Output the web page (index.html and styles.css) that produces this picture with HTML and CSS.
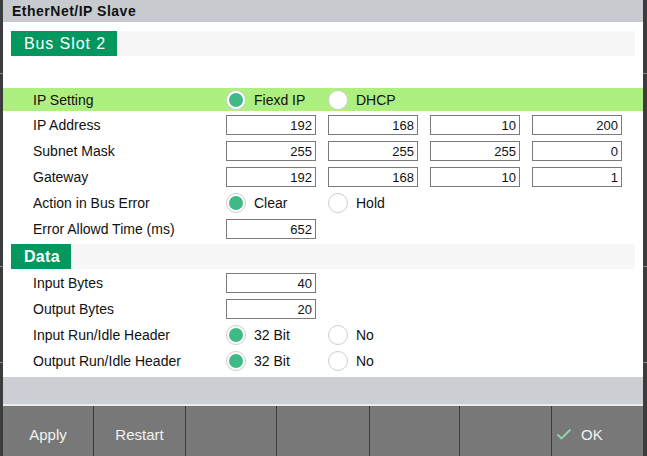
FILE: index.html
```html
<!DOCTYPE html>
<html>
<head>
<meta charset="utf-8">
<title>EtherNet/IP Slave</title>
<link rel="stylesheet" href="styles.css">
</head>
<body>
<div class="dialog">
  <div class="titlebar">EtherNet/IP Slave</div>
  <div class="content">
    <div class="section first"><span class="tag">Bus Slot 2</span></div>
    <div class="spacer"></div>
    <div class="row hl">
      <span class="label">IP Setting</span>
      <span class="radio"><i class="dot on"></i>Fiexd IP</span>
      <span class="radio"><i class="dot"></i>DHCP</span>
    </div>
    <div class="row">
      <span class="label">IP Address</span>
      <span class="field">192</span><span class="field">168</span><span class="field">10</span><span class="field">200</span>
    </div>
    <div class="row">
      <span class="label">Subnet Mask</span>
      <span class="field">255</span><span class="field">255</span><span class="field">255</span><span class="field">0</span>
    </div>
    <div class="row">
      <span class="label">Gateway</span>
      <span class="field">192</span><span class="field">168</span><span class="field">10</span><span class="field">1</span>
    </div>
    <div class="row">
      <span class="label">Action in Bus Error</span>
      <span class="radio"><i class="dot on"></i>Clear</span>
      <span class="radio"><i class="dot"></i>Hold</span>
    </div>
    <div class="row">
      <span class="label">Error Allowd Time (ms)</span>
      <span class="field">652</span>
    </div>
    <div class="section"><span class="tag bold">Data</span></div>
    <div class="row">
      <span class="label">Input Bytes</span>
      <span class="field">40</span>
    </div>
    <div class="row">
      <span class="label">Output Bytes</span>
      <span class="field">20</span>
    </div>
    <div class="row">
      <span class="label">Input Run/Idle Header</span>
      <span class="radio"><i class="dot on"></i>32 Bit</span>
      <span class="radio"><i class="dot"></i>No</span>
    </div>
    <div class="row">
      <span class="label">Output Run/Idle Header</span>
      <span class="radio"><i class="dot on"></i>32 Bit</span>
      <span class="radio"><i class="dot"></i>No</span>
    </div>
  </div>
  <div class="statusbar"></div>
  <div class="buttons">
    <div class="btn w90">Apply</div>
    <div class="btn w92">Restart</div>
    <div class="btn w91"></div>
    <div class="btn w93"></div>
    <div class="btn w90"></div>
    <div class="btn w92"></div>
    <div class="btn ok"><svg class="check" width="16" height="12" viewBox="0 0 16 12"><path d="M1.5 6.5 L5.5 10.5 L14.5 1.5" fill="none" stroke="#8fd3b1" stroke-width="1.8"/></svg>OK</div>
  </div>
</div>
</body>
</html>
```
FILE: styles.css
```css
html, body {
  margin: 0;
  padding: 0;
}
body {
  width: 647px;
  height: 456px;
  overflow: hidden;
  background-color: #3c3c3c;
  background-image:
    linear-gradient(#8a8a8a, #8a8a8a),
    linear-gradient(#8a8a8a, #8a8a8a),
    linear-gradient(#8a8a8a, #8a8a8a);
  background-size: 100% 1px;
  background-repeat: no-repeat;
  background-position: 0 73px, 0 266px, 0 362px;
  font-family: "Liberation Sans", Arial, sans-serif;
  color: #111;
}
.dialog {
  margin-left: 3px;
  width: 640px;
  height: 456px;
  display: flex;
  flex-direction: column;
}
.titlebar {
  height: 22px;
  line-height: 23px;
  background: #c7cbcf;
  padding-left: 9px;
  font-weight: bold;
  font-size: 14px;
  letter-spacing: 0.5px;
  color: #111;
}
.content {
  background: #fff;
  flex: 1;
  display: flex;
  flex-direction: column;
}
.section {
  margin: 3px 8px 0;
  height: 25px;
  background: #f7f7f7;
  display: flex;
  flex: none;
}
.section.first {
  margin-top: 9px;
}
.tag {
  box-sizing: border-box;
  background: #02975f;
  color: #fff;
  font-size: 16px;
  letter-spacing: 0.9px;
  line-height: 26px;
  padding-left: 13px;
  width: 106px;
  white-space: nowrap;
}
.tag.bold {
  font-weight: bold;
  width: 60px;
  letter-spacing: 0.3px;
}
.spacer {
  height: 32px;
  flex: none;
}
.row {
  height: 26px;
  flex: none;
  display: grid;
  grid-template-columns: 181px 90px 90px 90px 90px;
  column-gap: 12px;
  align-items: center;
  padding-left: 30px;
  font-size: 14px;
  padding-top: 1px;
  box-sizing: border-box;
}
.row.hl {
  height: 23px;
  padding-top: 0;
  background: #aef07f;
}
.label {
  white-space: nowrap;
}
.field {
  box-sizing: border-box;
  height: 20px;
  border: 1px solid #7b7b7b;
  text-align: right;
  padding-right: 3px;
  line-height: 19px;
  font-size: 13px;
  background: #fff;
}
.radio {
  display: flex;
  align-items: center;
  white-space: nowrap;
  font-size: 14px;
}
.dot {
  box-sizing: border-box;
  width: 20px;
  height: 20px;
  border-radius: 50%;
  border: 1px solid #cdcdcd;
  background: #fff;
  margin-right: 8px;
  display: flex;
  align-items: center;
  justify-content: center;
  flex: none;
}
.dot.on::after {
  content: "";
  width: 14px;
  height: 14px;
  border-radius: 50%;
  background: #3fb986;
}
.statusbar {
  height: 27px;
  background: #cbced2;
  border-bottom: 2px solid #ececec;
  flex: none;
}
.buttons {
  height: 50px;
  display: flex;
  background: #787878;
  flex: none;
}
.btn {
  flex: none;
  display: flex;
  align-items: center;
  justify-content: center;
  color: #f2f2f2;
  font-size: 15px;
  border-left: 1px solid #3b3b3b;
  padding-top: 6px;
  box-sizing: border-box;
}
.btn:first-child {
  border-left: none;
}
.w90 { width: 90px; }
.w91 { width: 91px; }
.w92 { width: 92px; }
.w93 { width: 93px; }
.btn.ok {
  flex: 1;
  justify-content: flex-start;
  padding-left: 4px;
}
.check {
  margin-right: 9px;
}
```
